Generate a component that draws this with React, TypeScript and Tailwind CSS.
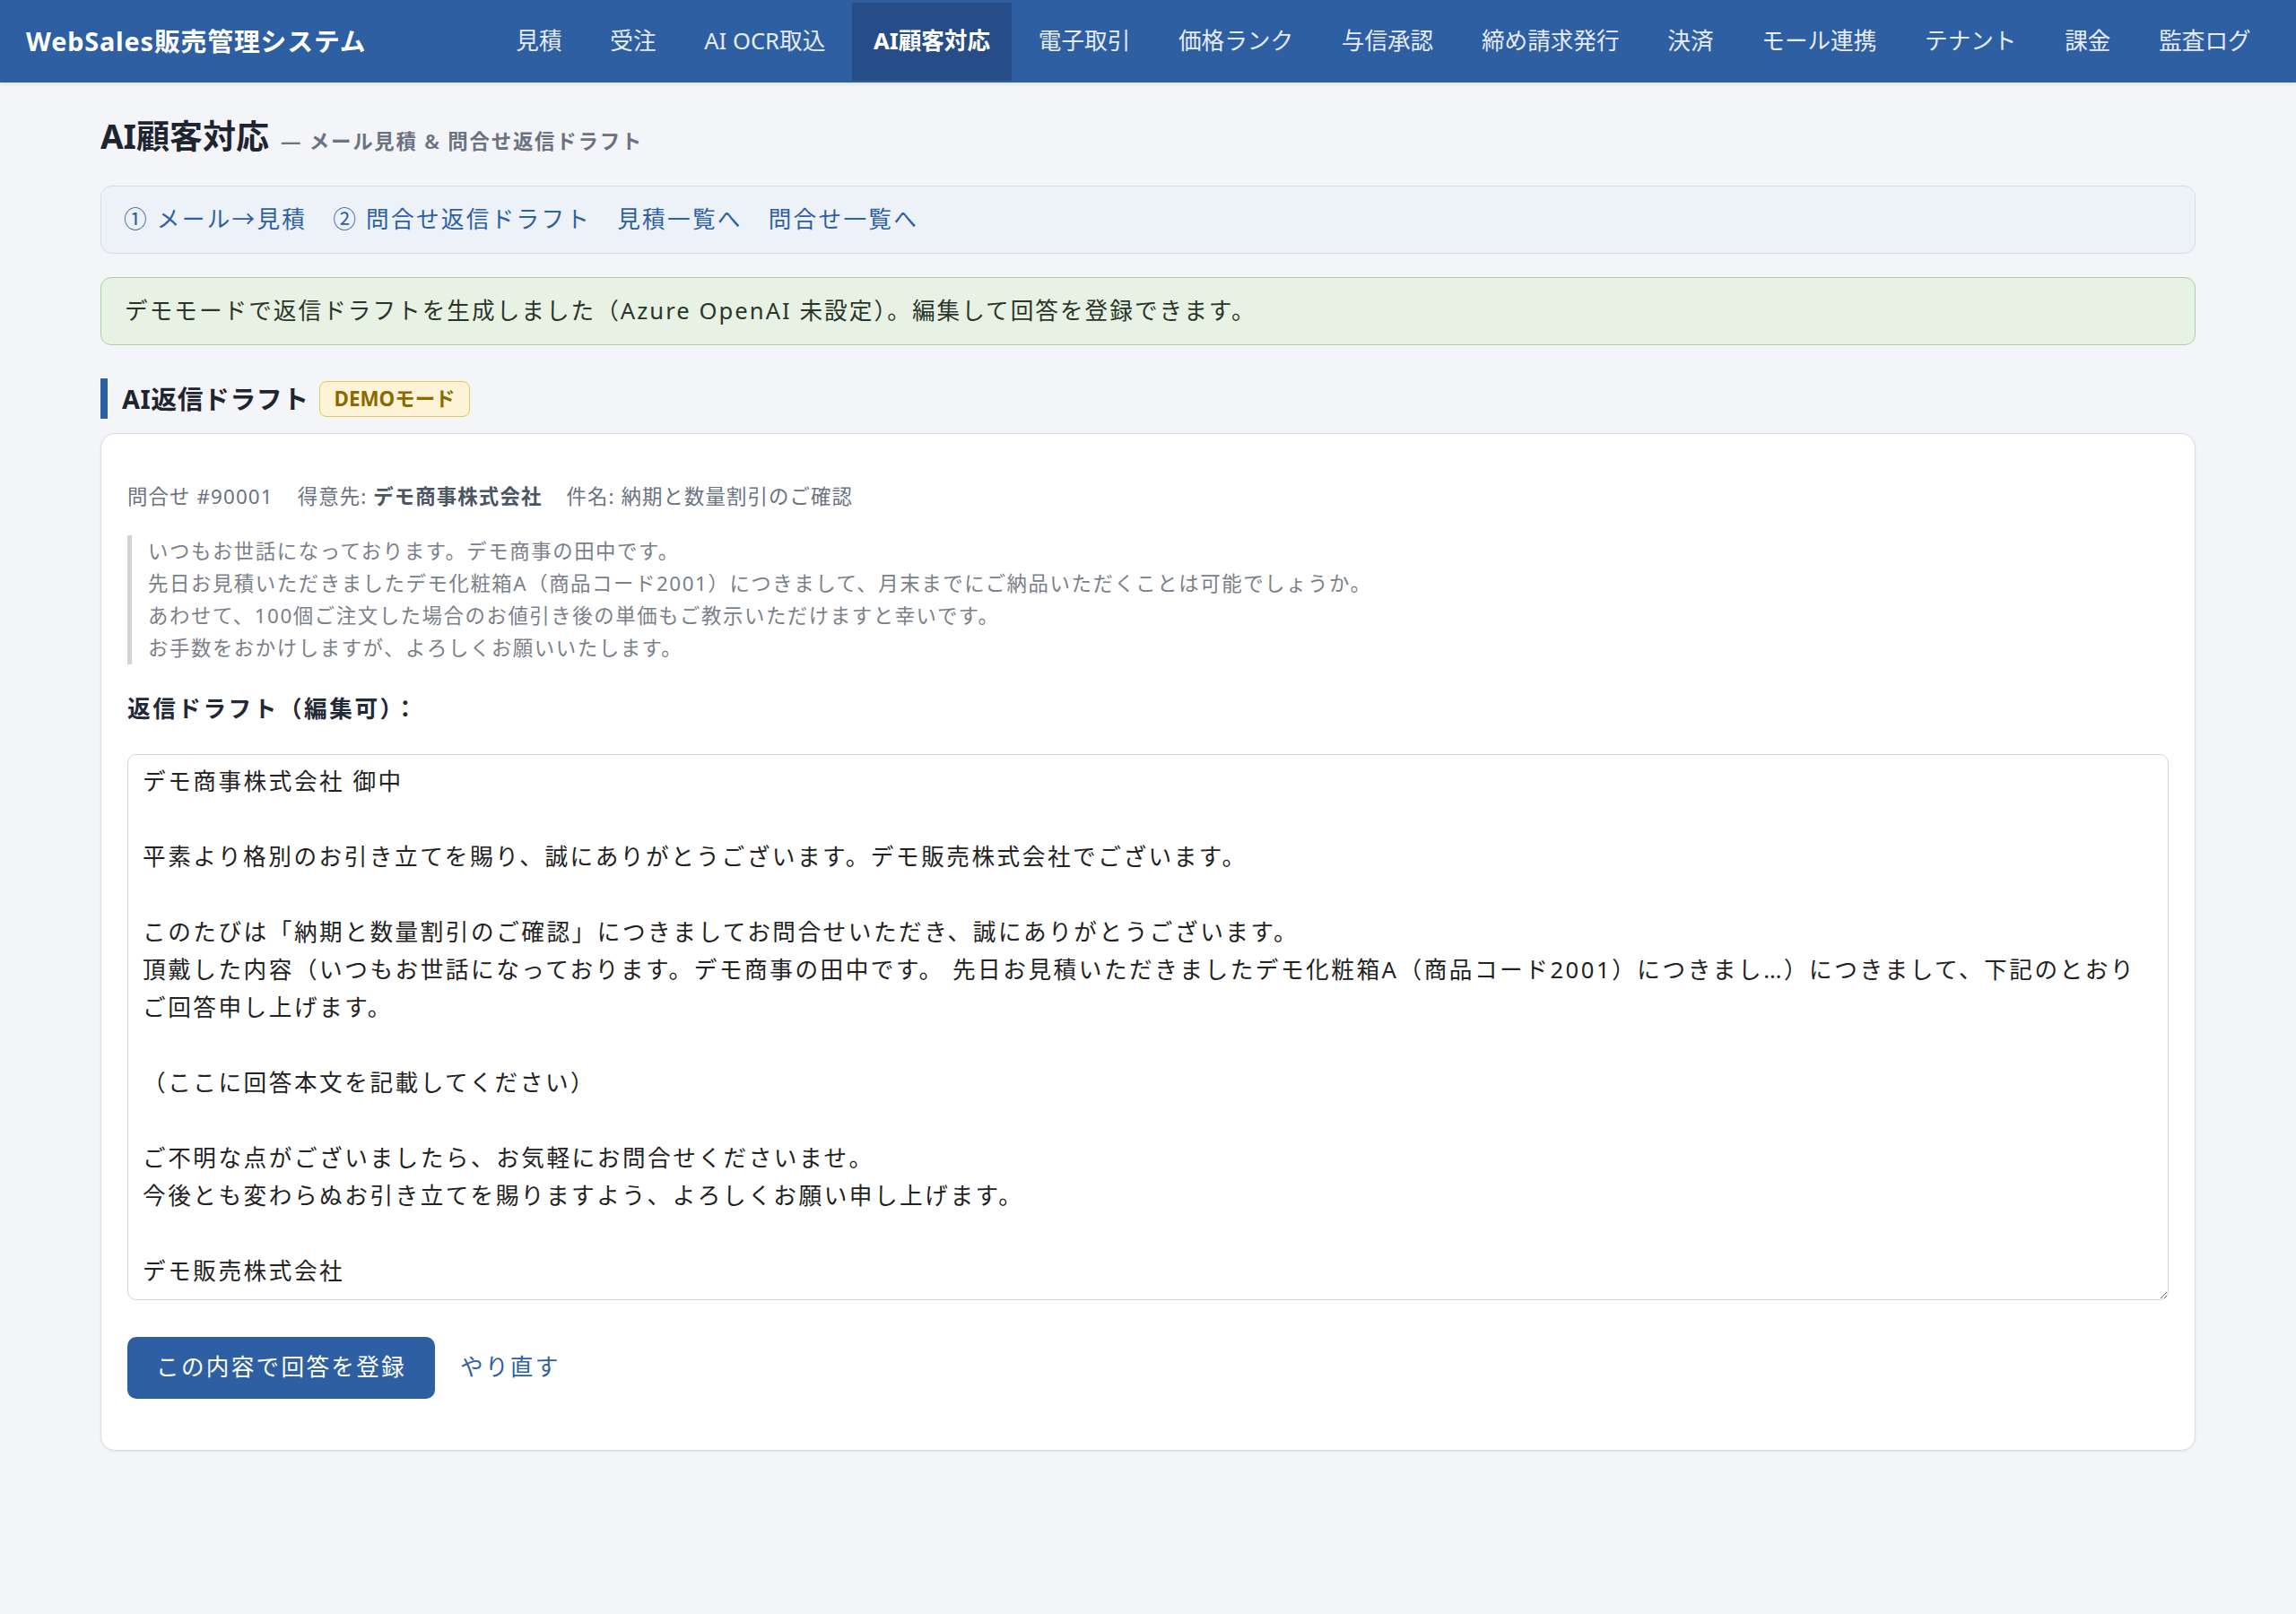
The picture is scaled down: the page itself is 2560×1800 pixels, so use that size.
import React, { useState } from 'react';

const navItems = [
  '見積',
  '受注',
  'AI OCR取込',
  'AI顧客対応',
  '電子取引',
  '価格ランク',
  '与信承認',
  '締め請求発行',
  '決済',
  'モール連携',
  'テナント',
  '課金',
  '監査ログ',
];

const initialDraft = `デモ商事株式会社 御中

平素より格別のお引き立てを賜り、誠にありがとうございます。デモ販売株式会社でございます。

このたびは「納期と数量割引のご確認」につきましてお問合せいただき、誠にありがとうございます。
頂戴した内容（いつもお世話になっております。デモ商事の田中です。 先日お見積いただきましたデモ化粧箱A（商品コード2001）につきまし…）につきまして、下記のとおりご回答申し上げます。

（ここに回答本文を記載してください）

ご不明な点がございましたら、お気軽にお問合せくださいませ。
今後とも変わらぬお引き立てを賜りますよう、よろしくお願い申し上げます。

デモ販売株式会社`;

const quoteLines = [
  'いつもお世話になっております。デモ商事の田中です。',
  '先日お見積いただきましたデモ化粧箱A（商品コード2001）につきまして、月末までにご納品いただくことは可能でしょうか。',
  'あわせて、100個ご注文した場合のお値引き後の単価もご教示いただけますと幸いです。',
  'お手数をおかけしますが、よろしくお願いいたします。',
];

export default function App() {
  const [draft, setDraft] = useState(initialDraft);

  return (
    <div
      className="min-h-screen bg-[#f4f5f9] text-[#222]"
      style={{ fontFamily: '"Noto Sans", "Noto Sans CJK JP", sans-serif' }}
    >
      {/* Header */}
      <header className="flex h-[92px] items-center justify-between bg-[#2e5fa3] pl-[29px] pr-[26px] shadow-[0_2px_4px_rgba(0,0,0,0.08)]">
        <div className="text-[28.8px] font-bold tracking-[0.03em] text-white">WebSales販売管理システム</div>
        <nav className="flex items-center gap-[5px]">
          {navItems.map((item) => (
            <a
              key={item}
              href="#"
              className={`flex h-[87px] items-center px-[24.4px] text-[25.6px] ${
                item === 'AI顧客対応'
                  ? 'bg-[#264d87] font-bold text-white'
                  : 'text-[#e6ecf6]'
              }`}
            >
              {item}
            </a>
          ))}
        </nav>
      </header>

      <main className="mx-auto w-[2336px] pt-[35px] pb-[60px]">
        {/* Title */}
        <div className="flex items-baseline">
          <h1 className="text-[37px] font-bold leading-[50px] text-[#1f2530]">AI顧客対応</h1>
          <span className="ml-[13px] text-[22.4px] font-semibold tracking-[0.08em] text-[#6b7280]">
            — メール見積 &amp; 問合せ返信ドラフト
          </span>
        </div>

        {/* Sub nav */}
        <div className="mt-[30px] flex gap-[29px] rounded-[12px] border border-[#d6dce7] bg-[#edf1f8] px-[25px] py-[16px] text-[25.6px] leading-[42px] tracking-[0.09em] text-[#2e5fa3]">
          <a href="#">① メール→見積</a>
          <a href="#">② 問合せ返信ドラフト</a>
          <a href="#">見積一覧へ</a>
          <a href="#">問合せ一覧へ</a>
        </div>

        {/* Alert */}
        <div className="mt-[26px] rounded-[12px] border border-[#a9d0a2] bg-[#e7f2e4] px-[26px] py-[16px] text-[25.6px] leading-[42px] tracking-[0.08em] text-[#2a352a]">
          デモモードで返信ドラフトを生成しました（Azure OpenAI 未設定）。編集して回答を登録できます。
        </div>

        {/* Section heading */}
        <div className="mt-[37px] flex h-[45px] items-center">
          <div className="h-full w-[8px] bg-[#2e5fa3]" />
          <h2 className="ml-[16px] text-[28.8px] font-bold tracking-[0.02em] text-[#1f2530]">AI返信ドラフト</h2>
          <span className="ml-[11px] flex h-[40px] items-center rounded-[8px] border-[1.6px] border-[#e5c560] bg-[#fdf4d8] px-[16px] text-[22.4px] font-bold text-[#8a6a00]">
            DEMOモード
          </span>
        </div>

        {/* Card */}
        <div className="mt-[16px] rounded-[16px] border border-[#d5dbe6] bg-white px-[29px] pt-[52px] pb-[57px] shadow-[0_1px_3px_rgba(0,0,0,0.06)]">
          <div className="flex gap-[27px] text-[22.4px] leading-[36px] tracking-[0.05em] text-[#6b7280]">
            <span>問合せ #90001</span>
            <span>
              得意先: <span className="font-bold text-[#4b5563]">デモ商事株式会社</span>
            </span>
            <span>件名: 納期と数量割引のご確認</span>
          </div>

          <div className="mt-[25px] border-l-[5px] border-[#d0d3d8] pl-[18px] text-[22.4px] leading-[36px] tracking-[0.07em] text-[#7a8089]">
            {quoteLines.map((line) => (
              <div key={line}>{line}</div>
            ))}
          </div>

          <div className="mt-[29px] text-[25.6px] font-bold leading-[41px] tracking-[0.1em] text-[#1f2937]">
            返信ドラフト（編集可）：
          </div>

          <textarea
            value={draft}
            onChange={(e) => setDraft(e.target.value)}
            className="mt-[30px] block h-[609px] w-full rounded-[10px] border border-[#cfd6e2] px-[16px] py-[9px] text-[25.6px] leading-[42px] tracking-[0.1em] text-[#222]"
          />

          <div className="mt-[41px] flex items-center gap-[28px]">
            <button className="h-[69px] rounded-[10px] bg-[#2e5fa3] px-[32px] text-[25.6px] tracking-[0.09em] text-white">
              この内容で回答を登録
            </button>
            <a href="#" className="text-[25.6px] tracking-[0.09em] text-[#2e5fa3]">
              やり直す
            </a>
          </div>
        </div>
      </main>
    </div>
  );
}
